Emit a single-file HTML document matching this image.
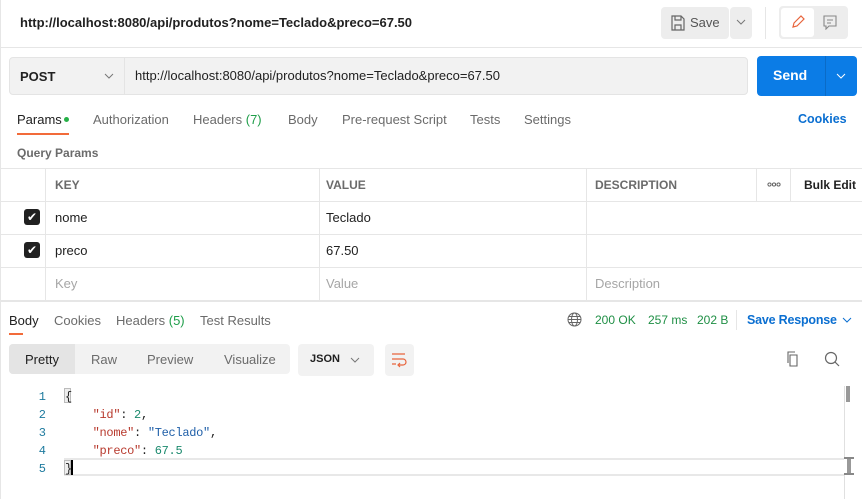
<!DOCTYPE html>
<html><head><style>
*{box-sizing:border-box;margin:0;padding:0}
body{width:862px;height:499px;overflow:hidden;background:#fff;font-family:"Liberation Sans",sans-serif;font-size:13px;color:#212121;position:relative}
.a{position:absolute;white-space:nowrap}
.g{color:#6b6b6b}
.mono{font-family:"Liberation Mono",monospace;font-size:12px}
</style></head><body>
<div class="a" style="left:0;top:0;width:1px;height:499px;background:#e6e6e6"></div>
<div class="a" style="left:20px;top:15px;font-weight:bold;font-size:13px">http://localhost:8080/api/produtos?nome=Teclado&amp;preco=67.50</div>
<div class="a" style="left:661px;top:7px;width:68px;height:32px;background:#ededed;border-radius:4px"></div>
<svg class="a" style="left:671px;top:15px" width="14" height="16" viewBox="0 0 14 16"><path d="M1 1h9l3 3v11H1z M4 1v4h6V1 M4 15v-5h6v5" fill="none" stroke="#666" stroke-width="1.2"/></svg>
<div class="a" style="left:690px;top:15px;color:#555">Save</div>
<div class="a" style="left:730px;top:7px;width:22px;height:32px;background:#ededed;border-radius:4px"></div>
<svg class="a" style="left:736px;top:19px" width="10" height="6" viewBox="0 0 10 6"><path d="M1 1l4 4 4-4" fill="none" stroke="#777" stroke-width="1"/></svg>
<div class="a" style="left:765px;top:7px;width:1px;height:32px;background:#e6e6e6"></div>
<div class="a" style="left:779px;top:6px;width:69px;height:33px;background:#ededed;border-radius:4px"></div>
<div class="a" style="left:781px;top:8px;width:33px;height:29px;background:#fff;border-radius:3px"></div>
<svg class="a" style="left:790px;top:14px" width="16" height="16" viewBox="0 0 16 16"><path d="M3 13l1-4 7-7 3 3-7 7z" fill="none" stroke="#e8643c" stroke-width="1.2"/></svg>
<svg class="a" style="left:822px;top:14px" width="16" height="16" viewBox="0 0 16 16"><path d="M2 2h12v10H7l-3 3v-3H2z M5 6h6 M5 9h4" fill="none" stroke="#888" stroke-width="1.1"/></svg>
<div class="a" style="left:0;top:47px;width:862px;height:1px;background:#e6e6e6"></div>

<div class="a" style="left:9px;top:57px;width:739px;height:38px;background:#f2f2f2;border:1px solid #e4e4e4;border-radius:4px"></div>
<div class="a" style="left:124px;top:57px;width:1px;height:38px;background:#e4e4e4"></div>
<div class="a" style="left:20px;top:69px;font-weight:bold">POST</div>
<svg class="a" style="left:104px;top:73px" width="10" height="6" viewBox="0 0 10 6"><path d="M1 1l4 4 4-4" fill="none" stroke="#777" stroke-width="1"/></svg>
<div class="a" style="left:135px;top:68px">http://localhost:8080/api/produtos?nome=Teclado&amp;preco=67.50</div>
<div class="a" style="left:757px;top:56px;width:100px;height:40px;background:#0b7ce6;border-radius:4px"></div>
<div class="a" style="left:825px;top:56px;width:1px;height:40px;background:#0a6bc7"></div>
<div class="a" style="left:773px;top:67px;color:#fff;font-weight:bold;font-size:14px">Send</div>
<svg class="a" style="left:836px;top:73px" width="10" height="6" viewBox="0 0 10 6"><path d="M1 1l4 4 4-4" fill="none" stroke="#fff" stroke-width="1"/></svg>

<div class="a" style="left:17px;top:112px">Params</div>
<div class="a" style="left:64px;top:117px;width:5px;height:5px;border-radius:50%;background:#26b047"></div>
<div class="a" style="left:17px;top:133px;width:52px;height:2px;background:#f26b3a"></div>
<div class="a g" style="left:93px;top:112px">Authorization</div>
<div class="a g" style="left:193px;top:112px">Headers <span style="color:#1f9e4a">(7)</span></div>
<div class="a g" style="left:288px;top:112px">Body</div>
<div class="a g" style="left:342px;top:112px">Pre-request Script</div>
<div class="a g" style="left:470px;top:112px">Tests</div>
<div class="a g" style="left:524px;top:112px">Settings</div>
<div class="a" style="left:798px;top:112px;color:#0b6fd1;font-weight:bold;font-size:12.5px">Cookies</div>

<div class="a g" style="left:17px;top:146px;font-weight:bold;font-size:12px">Query Params</div>
<div class="a" style="left:0;top:168px;width:862px;height:1px;background:#e6e6e6"></div>
<div class="a" style="left:0;top:201px;width:862px;height:1px;background:#e6e6e6"></div>
<div class="a" style="left:0;top:234px;width:862px;height:1px;background:#e6e6e6"></div>
<div class="a" style="left:0;top:267px;width:862px;height:1px;background:#e6e6e6"></div>
<div class="a" style="left:0;top:300px;width:862px;height:2px;background:#e6e6e6"></div>
<div class="a" style="left:45px;top:168px;width:1px;height:132px;background:#e6e6e6"></div>
<div class="a" style="left:319px;top:168px;width:1px;height:132px;background:#e6e6e6"></div>
<div class="a" style="left:586px;top:168px;width:1px;height:132px;background:#e6e6e6"></div>
<div class="a" style="left:756px;top:168px;width:1px;height:33px;background:#e6e6e6"></div>
<div class="a" style="left:790px;top:168px;width:1px;height:33px;background:#e6e6e6"></div>
<div class="a g" style="left:55px;top:178px;font-weight:bold;font-size:12px">KEY</div>
<div class="a g" style="left:326px;top:178px;font-weight:bold;font-size:12px">VALUE</div>
<div class="a g" style="left:595px;top:178px;font-weight:bold;font-size:12px">DESCRIPTION</div>
<svg class="a" style="left:767px;top:182px" width="14" height="5" viewBox="0 0 14 5"><g fill="none" stroke="#555" stroke-width="0.9"><circle cx="2.5" cy="2.5" r="1.6"/><circle cx="7" cy="2.5" r="1.6"/><circle cx="11.5" cy="2.5" r="1.6"/></g></svg>
<div class="a" style="left:804px;top:178px;font-weight:bold;font-size:12px">Bulk Edit</div>
<div class="a" style="left:24px;top:209px;width:16px;height:16px;background:#212121;border-radius:3px;color:#fff;font-size:12px;text-align:center;line-height:16px">&#10004;</div>
<div class="a" style="left:24px;top:242px;width:16px;height:16px;background:#212121;border-radius:3px;color:#fff;font-size:12px;text-align:center;line-height:16px">&#10004;</div>
<div class="a" style="left:55px;top:210px">nome</div>
<div class="a" style="left:326px;top:210px">Teclado</div>
<div class="a" style="left:55px;top:243px">preco</div>
<div class="a" style="left:326px;top:243px">67.50</div>
<div class="a" style="left:55px;top:276px;color:#a6a6a6">Key</div>
<div class="a" style="left:326px;top:276px;color:#a6a6a6">Value</div>
<div class="a" style="left:595px;top:276px;color:#a6a6a6">Description</div>

<div class="a" style="left:9px;top:313px">Body</div>
<div class="a" style="left:9px;top:333px;height:2px;background:#f26b3a;width:14px"></div>
<div class="a g" style="left:54px;top:313px">Cookies</div>
<div class="a g" style="left:116px;top:313px">Headers <span style="color:#1f9e4a">(5)</span></div>
<div class="a g" style="left:200px;top:313px">Test Results</div>
<svg class="a" style="left:567px;top:312px" width="15" height="15" viewBox="0 0 15 15"><g fill="none" stroke="#666" stroke-width="1"><circle cx="7.5" cy="7.5" r="6.5"/><ellipse cx="7.5" cy="7.5" rx="3" ry="6.5"/><path d="M1 7.5h13M2 4.5h11M2 10.5h11"/></g></svg>
<div class="a" style="left:595px;top:313px;color:#1f8f45;font-size:12px">200 OK</div>
<div class="a" style="left:648px;top:313px;color:#1f8f45;font-size:12px">257 ms</div>
<div class="a" style="left:697px;top:313px;color:#1f8f45;font-size:12px">202 B</div>
<div class="a" style="left:736px;top:310px;width:1px;height:20px;background:#e6e6e6"></div>
<div class="a" style="left:747px;top:313px;color:#0b6fd1;font-weight:bold;font-size:12.5px;letter-spacing:-0.2px">Save Response</div>
<svg class="a" style="left:842px;top:317px" width="10" height="6" viewBox="0 0 10 6"><path d="M1 1l4 4 4-4" fill="none" stroke="#0b6fd1" stroke-width="1"/></svg>

<div class="a" style="left:9px;top:344px;width:281px;height:30px;background:#f2f2f2;border-radius:4px"></div>
<div class="a" style="left:9px;top:344px;width:66px;height:30px;background:#e4e4e4;border-radius:4px 0 0 4px"></div>
<div class="a" style="left:25px;top:352px">Pretty</div>
<div class="a g" style="left:91px;top:352px">Raw</div>
<div class="a g" style="left:147px;top:352px">Preview</div>
<div class="a g" style="left:224px;top:352px">Visualize</div>
<div class="a" style="left:298px;top:344px;width:76px;height:32px;background:#f2f2f2;border-radius:4px"></div>
<div class="a" style="left:310px;top:353px;font-weight:bold;font-size:11px">JSON</div>
<svg class="a" style="left:350px;top:357px" width="10" height="6" viewBox="0 0 10 6"><path d="M1 1l4 4 4-4" fill="none" stroke="#777" stroke-width="1"/></svg>
<div class="a" style="left:385px;top:344px;width:29px;height:32px;background:#f2f2f2;border-radius:4px"></div>
<svg class="a" style="left:390px;top:352px" width="18" height="16" viewBox="0 0 18 16"><path d="M2 2h13M2 7h11a3 3 0 010 6H9M2 12h4M10 11l-2 2 2 2" fill="none" stroke="#e8643c" stroke-width="1.2"/></svg>
<svg class="a" style="left:785px;top:351px" width="16" height="16" viewBox="0 0 16 16"><path d="M5 4h7v11H5z M3 12V1h7" fill="none" stroke="#666" stroke-width="1.1"/></svg>
<svg class="a" style="left:824px;top:351px" width="16" height="16" viewBox="0 0 16 16"><circle cx="7" cy="7" r="5.5" fill="none" stroke="#666" stroke-width="1.2"/><path d="M11 11l4 4" stroke="#666" stroke-width="1.2"/></svg>

<div class="a" style="left:64px;top:458px;width:780px;height:18px;border-top:2px solid #e8e8e8;border-bottom:2px solid #e8e8e8"></div>
<div class="a" style="left:844px;top:386px;width:1px;height:113px;background:#e0e0e0"></div>
<div class="a" style="left:846px;top:386px;width:4px;height:16px;background:#999"></div>
<div class="a" style="left:844px;top:457px;width:10px;height:18px;background:#888"></div>
<div class="a" style="left:844px;top:459px;width:10px;height:14px;border-left:3px solid #fff;border-right:3px solid #fff;background:#999"></div>
<div class="a mono" style="left:36px;top:388px;color:#1d7a9e;line-height:18px;text-align:right;width:10px">1<br>2<br>3<br>4<br>5</div>
<div class="a" style="left:64px;top:388px;width:7px;height:15px;border:1px solid #bbb;background:#eee"></div>
<div class="a" style="left:64px;top:460px;width:7px;height:15px;border:1px solid #bbb;background:#eee"></div>
<div class="a" style="left:71px;top:460px;width:2px;height:15px;background:#000"></div>
<div class="a mono" style="left:65px;top:388px;line-height:18px;letter-spacing:-0.3px">{<br>&nbsp;&nbsp;&nbsp;&nbsp;<span style="color:#b83a2e">"id"</span>: <span style="color:#1c8a6e">2</span>,<br>&nbsp;&nbsp;&nbsp;&nbsp;<span style="color:#b83a2e">"nome"</span>: <span style="color:#1f5fa8">"Teclado"</span>,<br>&nbsp;&nbsp;&nbsp;&nbsp;<span style="color:#b83a2e">"preco"</span>: <span style="color:#1c8a6e">67.5</span><br>}</div>
</body></html>
